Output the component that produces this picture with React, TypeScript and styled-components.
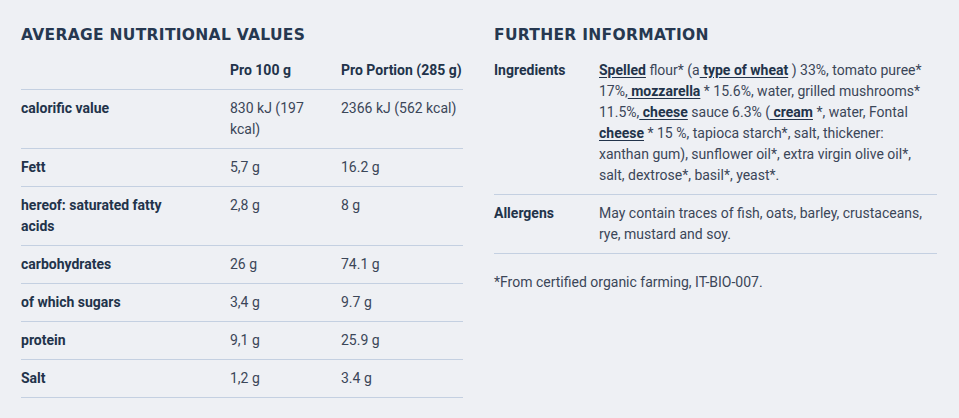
import React from 'react';
import styled, { createGlobalStyle } from 'styled-components';

const GlobalStyle = createGlobalStyle`
  html, body {
    margin: 0;
    padding: 0;
    background: #eef0f4;
  }
  body {
    font-family: Roboto, "Liberation Sans", sans-serif;
    color: #3b4658;
  }
`;

const Page = styled.div`
  display: grid;
  grid-template-columns: 442px 443px;
  column-gap: 31px;
  padding: 25px 22px 0 21px;
  min-height: 418px;
  box-sizing: border-box;
`;

const Section = styled.section`
  display: flex;
  flex-direction: column;
`;

const Heading = styled.h2`
  margin: 0 0 7px;
  font-family: "DejaVu Sans", Verdana, sans-serif;
  font-weight: 700;
  font-size: 15.5px;
  line-height: 20px;
  letter-spacing: 0.3px;
  color: #263850;
`;

const Table = styled.table`
  width: 100%;
  border-collapse: collapse;
  table-layout: fixed;
  font-size: 14px;
  line-height: 21px;
`;

const Col = styled.col<{ $w: number }>`
  width: ${(p) => p.$w}px;
`;

const HeadCell = styled.th`
  text-align: left;
  font-weight: 700;
  color: #22334a;
  padding: 8px 0;
  border-bottom: 1px solid #c4d0e1;
`;

const Row = styled.tr`
  border-bottom: 1px solid #c4d0e1;
`;

const Label = styled.td<{ $gap?: number }>`
  vertical-align: top;
  padding: 8px ${(p) => p.$gap ?? 12}px 8px 0;
  font-weight: 700;
  color: #22334a;
`;

const Value = styled.td<{ $gap?: number }>`
  vertical-align: top;
  padding: 8px ${(p) => p.$gap ?? 10}px 8px 0;
  color: #3b4658;
`;

const Mark = styled.span`
  font-weight: 700;
  color: #22334a;
  text-decoration: underline;
  text-underline-offset: 2px;
`;

const Note = styled.p`
  margin: 18px 0 0;
  font-size: 14px;
  line-height: 21px;
  color: #3b4658;
`;

const nutrition = [
  { name: 'calorific value', per100: '830 kJ (197 kcal)', portion: '2366 kJ (562 kcal)' },
  { name: 'Fett', per100: '5,7 g', portion: '16.2 g' },
  { name: 'hereof: saturated fatty acids', per100: '2,8 g', portion: '8 g' },
  { name: 'carbohydrates', per100: '26 g', portion: '74.1 g' },
  { name: 'of which sugars', per100: '3,4 g', portion: '9.7 g' },
  { name: 'protein', per100: '9,1 g', portion: '25.9 g' },
  { name: 'Salt', per100: '1,2 g', portion: '3.4 g' },
];

export default function App() {
  return (
    <>
      <GlobalStyle />
      <Page>
        <Section>
          <Heading>AVERAGE NUTRITIONAL VALUES</Heading>
          <Table>
            <colgroup>
              <Col $w={209} />
              <Col $w={111} />
              <Col $w={122} />
            </colgroup>
            <thead>
              <tr>
                <HeadCell />
                <HeadCell>Pro 100 g</HeadCell>
                <HeadCell>Pro Portion (285 g)</HeadCell>
              </tr>
            </thead>
            <tbody>
              {nutrition.map((n) => (
                <Row key={n.name}>
                  <Label $gap={42}>{n.name}</Label>
                  <Value $gap={14}>{n.per100}</Value>
                  <Value $gap={0}>{n.portion}</Value>
                </Row>
              ))}
            </tbody>
          </Table>
        </Section>
        <Section>
          <Heading>FURTHER INFORMATION</Heading>
          <Table>
            <colgroup>
              <Col $w={105} />
              <Col $w={338} />
            </colgroup>
            <tbody>
              <Row>
                <Label>Ingredients</Label>
                <Value>
                  <Mark>Spelled</Mark> flour* (a<Mark> type of wheat</Mark> ) 33%, tomato puree* 17%,
                  <Mark> mozzarella</Mark> * 15.6%, water, grilled mushrooms* 11.5%,
                  <Mark> cheese</Mark> sauce 6.3% (<Mark> cream</Mark> *, water, Fontal{' '}
                  <Mark>cheese</Mark> * 15 %, tapioca starch*, salt, thickener: xanthan gum),
                  sunflower oil*, extra virgin olive oil*, salt, dextrose*, basil*, yeast*.
                </Value>
              </Row>
              <Row>
                <Label>Allergens</Label>
                <Value>May contain traces of fish, oats, barley, crustaceans, rye, mustard and soy.</Value>
              </Row>
            </tbody>
          </Table>
          <Note>*From certified organic farming, IT-BIO-007.</Note>
        </Section>
      </Page>
    </>
  );
}
